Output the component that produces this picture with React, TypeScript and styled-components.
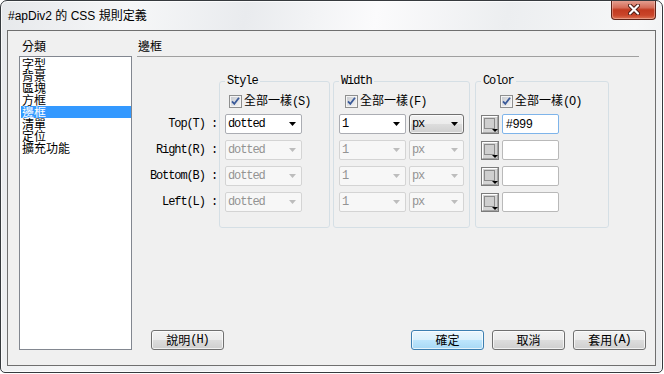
import styled, { createGlobalStyle } from "styled-components";

const CJK = `"Noto Sans CJK TC", "Noto Sans CJK JP", sans-serif`;
const MONO = `"Liberation Mono", "Noto Sans CJK TC", monospace`;

const GlobalStyle = createGlobalStyle`
  html, body {
    margin: 0;
    padding: 0;
    background: #ffffff;
  }
  body {
    font-family: "Liberation Sans", "Noto Sans CJK TC", sans-serif;
    font-size: 12px;
    color: #000;
  }
`;

const categories = ["字型", "背景", "區塊", "方框", "邊框", "清單", "定位", "擴充功能"];
const sides = ["Top(T) :", "Right(R) :", "Bottom(B) :", "Left(L) :"];

function Arrow({ disabled }: { disabled?: boolean }) {
  return (
    <svg width="7" height="4" viewBox="0 0 7 4">
      <path d="M0 0 H7 L3.5 4 Z" fill={disabled ? "#bdbdbd" : "#000"} />
    </svg>
  );
}

function CheckBox() {
  return (
    <svg width="13" height="13" viewBox="0 0 13 13">
      <defs>
        <linearGradient id="cbg" x1="0" y1="0" x2="1" y2="1">
          <stop offset="0" stopColor="#c9ccd1" />
          <stop offset="1" stopColor="#f4f4f4" />
        </linearGradient>
      </defs>
      <rect x="0.5" y="0.5" width="12" height="12" fill="#f4f4f4" stroke="#8e8f8f" />
      <rect x="2" y="2" width="9" height="9" fill="url(#cbg)" />
      <path d="M3 6.3 L5.3 8.8 L10 2.8" fill="none" stroke="#3b5b9a" strokeWidth="1.8" />
    </svg>
  );
}

function ColorSwatch() {
  return (
    <svg width="18" height="19" viewBox="0 0 18 19">
      <rect x="0.5" y="0.5" width="17" height="18" fill="#d4d4d4" stroke="#7c7c7c" />
      <path d="M1.5 17.5 V1.5 H16.5" fill="none" stroke="#ffffff" />
      <path d="M16.5 1.5 V17.5 H1.5" fill="none" stroke="#a4a4a4" />
      <rect x="3.5" y="3.5" width="10" height="10" fill="#cfcfcf" stroke="#8a8a8a" />
      <path d="M11 14 H17 L14 17 Z" fill="#000" />
    </svg>
  );
}

function CloseGlyph() {
  return (
    <svg width="12" height="11" viewBox="0 0 12 11">
      <path d="M2 1.5 L10 9.5 M10 1.5 L2 9.5" stroke="#4a1b12" strokeWidth="4" strokeLinecap="round" />
      <path d="M2 1.5 L10 9.5 M10 1.5 L2 9.5" stroke="#ffffff" strokeWidth="2.2" strokeLinecap="round" />
    </svg>
  );
}

export default function App() {
  return (
    <>
      <GlobalStyle />
      <Window>
        <TitleBar>
          <Title>#apDiv2 的 CSS 規則定義</Title>
          <CloseButton>
            <CloseGlyph />
          </CloseButton>
        </TitleBar>
        <Client>
          <LeftColumn>
            <SectionLabel $pad={3}>分類</SectionLabel>
            <ListBox>
              {categories.map((c) => (
                <ListItem key={c} $selected={c === "邊框"}>
                  {c}
                </ListItem>
              ))}
            </ListBox>
          </LeftColumn>
          <RightColumn>
            <Heading>邊框</Heading>
            <GroupsRow>
              <LabelColumn>
                {sides.map((s) => (
                  <SideLabel key={s}>{s}</SideLabel>
                ))}
              </LabelColumn>

              <Group $w={111} $ml={0}>
                <Legend>Style</Legend>
                <CheckRow $ml={4}>
                  <CheckBox />
                  <span>
                    全部一樣<Lat>(S)</Lat>
                  </span>
                </CheckRow>
                {[0, 1, 2, 3].map((i) => (
                  <Row key={i}>
                    <Combo $w={77} $disabled={i > 0}>
                      <span>dotted</span>
                      <Arrow disabled={i > 0} />
                    </Combo>
                  </Row>
                ))}
              </Group>

              <Group $w={137} $ml={3}>
                <Legend>Width</Legend>
                <CheckRow $ml={6}>
                  <CheckBox />
                  <span>
                    全部一樣<Lat>(F)</Lat>
                  </span>
                </CheckRow>
                {[0, 1, 2, 3].map((i) => (
                  <Row key={i} $gap={3}>
                    <Combo $w={67} $disabled={i > 0}>
                      <span>1</span>
                      <Arrow disabled={i > 0} />
                    </Combo>
                    <Combo $w={55} $disabled={i > 0} $button={i === 0}>
                      <span>px</span>
                      <Arrow disabled={i > 0} />
                    </Combo>
                  </Row>
                ))}
              </Group>

              <Group $w={134} $ml={5}>
                <Legend>Color</Legend>
                <CheckRow $ml={19}>
                  <CheckBox />
                  <span>
                    全部一樣<Lat>(O)</Lat>
                  </span>
                </CheckRow>
                {[0, 1, 2, 3].map((i) => (
                  <Row key={i} $gap={3}>
                    <ColorSwatch />
                    <TextBox $focused={i === 0}>{i === 0 ? "#999" : ""}</TextBox>
                  </Row>
                ))}
              </Group>
            </GroupsRow>

            <ButtonRow>
              <Button>
                說明<Lat>(H)</Lat>
              </Button>
              <Spacer />
              <Button $default>確定</Button>
              <Button>取消</Button>
              <Button>
                套用<Lat>(A)</Lat>
              </Button>
            </ButtonRow>
          </RightColumn>
        </Client>
      </Window>
    </>
  );
}

const Window = styled.div`
  width: 663px;
  height: 373px;
  box-sizing: border-box;
  border: 1px solid #363a3e;
  border-radius: 7px 7px 5px 5px;
  background: linear-gradient(
    100deg,
    #e6e8eb 0%,
    #f6f7f8 18%,
    #e9ebee 34%,
    #fbfbfc 52%,
    #eceef0 70%,
    #f6f7f8 88%,
    #e8eaec 100%
  );
  box-shadow: inset 0 0 0 1px rgba(255, 255, 255, 0.75);
  display: flex;
  flex-direction: column;
  overflow: hidden;
`;

const TitleBar = styled.div`
  height: 29px;
  display: flex;
  align-items: flex-start;
  padding-left: 7px;
`;

const Title = styled.div`
  flex: 1;
  margin-top: 8px;
  line-height: 14px;
  font-size: 12px;
  font-family: "Liberation Sans", "Noto Sans CJK TC", sans-serif;
  color: #000;
  white-space: nowrap;
`;

const CloseButton = styled.div`
  width: 45px;
  height: 20px;
  box-sizing: border-box;
  margin-top: -1px;
  margin-right: 6px;
  border: 1px solid #5e2318;
  border-top: none;
  border-radius: 0 0 4px 4px;
  background: linear-gradient(#e6a597 0%, #d56c58 40%, #c23a20 52%, #c9452a 80%, #dc7354 100%);
  box-shadow: inset 0 0 0 1px rgba(255, 220, 210, 0.4);
  display: flex;
  align-items: center;
  justify-content: center;
`;

const Client = styled.div`
  flex: 1;
  margin: 0 6px 6px 6px;
  border: 1px solid #6f6f6f;
  background: #f0f0f0;
  padding: 9px 9px 15px 11px;
  display: grid;
  grid-template-columns: 113px 1fr;
  column-gap: 5px;
  min-height: 0;
`;

const LeftColumn = styled.div`
  display: flex;
  flex-direction: column;
`;

const SectionLabel = styled.div<{ $pad: number }>`
  font-family: ${CJK};
  font-size: 12px;
  line-height: 12px;
  height: 12px;
  padding-left: ${(p) => p.$pad}px;
`;

const ListBox = styled.div`
  flex: 1;
  margin-top: 4px;
  border: 1px solid #828790;
  background: #ffffff;
  padding-top: 1px;
`;

const ListItem = styled.div<{ $selected?: boolean }>`
  height: 12px;
  line-height: 12px;
  font-family: ${CJK};
  font-size: 12px;
  margin-left: 1px;
  padding-left: 1px;
  background: ${(p) => (p.$selected ? "#3399ff" : "transparent")};
  color: ${(p) => (p.$selected ? "#ffffff" : "#000000")};
`;

const RightColumn = styled.div`
  display: flex;
  flex-direction: column;
`;

const Heading = styled.div`
  font-family: ${CJK};
  font-size: 12px;
  line-height: 12px;
  height: 12px;
  padding: 0 0 4px 1px;
  margin-right: 7px;
  border-bottom: 1px solid #a0a0a0;
`;

const GroupsRow = styled.div`
  display: flex;
  align-items: flex-start;
  margin-top: 18px;
`;

const LabelColumn = styled.div`
  width: 82px;
  box-sizing: border-box;
  padding: 39px 2px 0 0;
  display: flex;
  flex-direction: column;
  align-items: flex-end;
  gap: 6px;
`;

const SideLabel = styled.div`
  height: 20px;
  line-height: 20px;
  font-family: ${MONO};
  font-size: 12px;
  letter-spacing: -1.1px;
  white-space: pre;
`;

const Group = styled.fieldset<{ $w: number; $ml: number }>`
  width: ${(p) => p.$w}px;
  min-width: 0;
  box-sizing: border-box;
  margin: 0 0 0 ${(p) => p.$ml}px;
  border: 1px solid #d5dfe5;
  border-radius: 3px;
  padding: 7px 5px 15px 5px;
  display: flex;
  flex-direction: column;
  gap: 6px;
`;

const Legend = styled.legend`
  padding: 0 2px;
  font-family: ${MONO};
  font-size: 12px;
  letter-spacing: -1.1px;
  line-height: 12px;
  color: #000;
`;

const Lat = styled.span`
  font-family: ${MONO};
  font-size: 12px;
  letter-spacing: -1.1px;
`;

const CheckRow = styled.div<{ $ml: number }>`
  height: 14px;
  display: flex;
  align-items: center;
  gap: 2px;
  margin-left: ${(p) => p.$ml}px;
  font-family: ${CJK};
  font-size: 12px;
  line-height: 14px;
  white-space: nowrap;
`;

const Row = styled.div<{ $gap?: number }>`
  height: 20px;
  display: flex;
  align-items: center;
  gap: ${(p) => p.$gap ?? 0}px;
`;

const Combo = styled.div<{ $w: number; $disabled?: boolean; $button?: boolean }>`
  width: ${(p) => p.$w}px;
  height: 20px;
  box-sizing: border-box;
  display: flex;
  align-items: center;
  justify-content: space-between;
  padding: 0 5px 0 2px;
  border: 1px solid
    ${(p) => (p.$disabled ? "#d4d4d4" : p.$button ? "#707070" : "#abadb3")};
  border-radius: ${(p) => (p.$button ? 3 : 2)}px;
  background: ${(p) =>
    p.$button
      ? "linear-gradient(#f2f2f2 0%, #ebebeb 50%, #dddddd 50%, #cfcfcf 100%)"
      : p.$disabled
      ? "#f7f7f7"
      : "#ffffff"};
  box-shadow: ${(p) => (p.$button ? "inset 0 0 0 1px rgba(255,255,255,0.7)" : "none")};
  color: ${(p) => (p.$disabled ? "#939393" : "#000000")};
  font-family: ${MONO};
  font-size: 12px;
  letter-spacing: -1.1px;
`;

const TextBox = styled.div<{ $focused?: boolean }>`
  width: 57px;
  height: 20px;
  box-sizing: border-box;
  border: 1px solid ${(p) => (p.$focused ? "#7eb4ea" : "#b9b9b9")};
  border-radius: 2px;
  background: #ffffff;
  padding-left: 3px;
  line-height: 18px;
  font-family: "Liberation Sans", sans-serif;
  font-size: 12px;
  color: #000;
`;

const ButtonRow = styled.div`
  margin-top: auto;
  display: flex;
  gap: 8px;
  padding-left: 14px;
`;

const Spacer = styled.div`
  flex: 1;
`;

const Button = styled.div<{ $default?: boolean }>`
  width: 73px;
  height: 20px;
  box-sizing: border-box;
  border: 1px solid ${(p) => (p.$default ? "#3c7fb1" : "#707070")};
  border-radius: 3px;
  background: ${(p) =>
    p.$default
      ? "linear-gradient(#eaf6fd 0%, #d9f0fc 50%, #bee6fd 50%, #a7d9f5 100%)"
      : "linear-gradient(#f2f2f2 0%, #ebebeb 50%, #dddddd 50%, #cfcfcf 100%)"};
  box-shadow: inset 0 0 0 1px rgba(255, 255, 255, 0.7);
  display: flex;
  align-items: center;
  justify-content: center;
  font-family: ${CJK};
  font-size: 12px;
  line-height: 14px;
  color: #000;
`;
